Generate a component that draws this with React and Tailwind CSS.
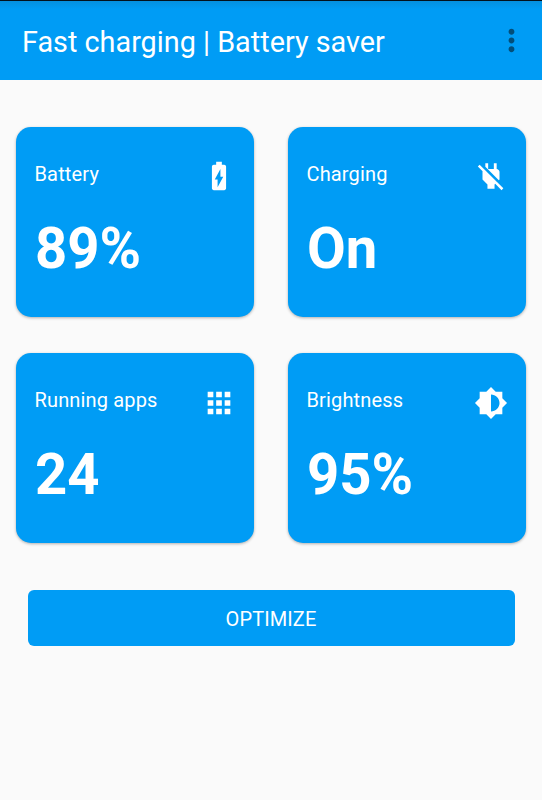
import React from 'react';
import { MdBatteryChargingFull, MdApps, MdBrightnessMedium, MdMoreVert } from 'react-icons/md';

function PlugOffIcon({ className }) {
    return (
        <svg viewBox="0 0 24 24" fill="currentColor" className={className}>
            <path d="M18 14.49V9c0-1-1.01-2.01-2-2V3h-2v4h-4V3H8v2.48l9.51 9.5.49-.49zm-1.76 1.77L7.2 7.2l-.01.01L3.98 4 2.71 5.25l3.36 3.36C6.04 8.74 6 8.87 6 9v5.48L9.5 18v3h5v-3l.48-.48L19.45 22l1.26-1.28-4.47-4.46z" />
        </svg>
    );
}

const stats = [
    { label: 'Battery', value: '89%', icon: MdBatteryChargingFull },
    { label: 'Charging', value: 'On', icon: PlugOffIcon },
    { label: 'Running apps', value: '24', icon: MdApps },
    { label: 'Brightness', value: '95%', icon: MdBrightnessMedium },
];

function StatCard({ label, value, icon: Icon }) {
    return (
        <div className="h-[190px] rounded-[15px] bg-[#009cf5] pl-[18.5px] pr-[18.5px] pt-[32px] text-white shadow-[0_1px_3px_rgba(0,0,0,0.3)]">
            <div className="flex h-9 items-start justify-between">
                <span className="text-[20px] leading-[30px] tracking-[0.15px]">{label}</span>
                <Icon className="mt-[0.5px] h-[34px] w-[34px]" />
            </div>
            <div className="mt-[19px] origin-left scale-x-[0.97] text-[58px] font-bold leading-[68px]">{value}</div>
        </div>
    );
}

function App() {
    return (
        <div className="h-[800px] overflow-hidden bg-[#fafafa] font-[Roboto,sans-serif]">
            <header className="flex h-20 items-center justify-between border-t border-[#03121d] bg-[#009cf5] bg-linear-to-b from-[#0590df] to-[#009cf5] to-[8px] pl-[22px] pr-[13.5px] pt-[3px] text-white">
                <h1 className="text-[28.8px] leading-10">Fast charging | Battery saver</h1>
                <button aria-label="More options" className="mb-[4px]">
                    <MdMoreVert className="h-[35px] w-[35px] text-[#034e79]" />
                </button>
            </header>
            <main>
                <div className="grid grid-cols-2 gap-x-[34px] gap-y-[36.5px] px-4 pt-[46.8px]">
                    {stats.map((stat) => <StatCard key={stat.label} {...stat} />)}
                </div>
                <div className="px-[27.5px] pt-[46.5px]">
                    <button className="h-[56.5px] w-full rounded-[6px] bg-[#009cf5] pt-px text-[20px] tracking-[0.1px] text-white">OPTIMIZE</button>
                </div>
            </main>
        </div>
    );
}

export default App;
